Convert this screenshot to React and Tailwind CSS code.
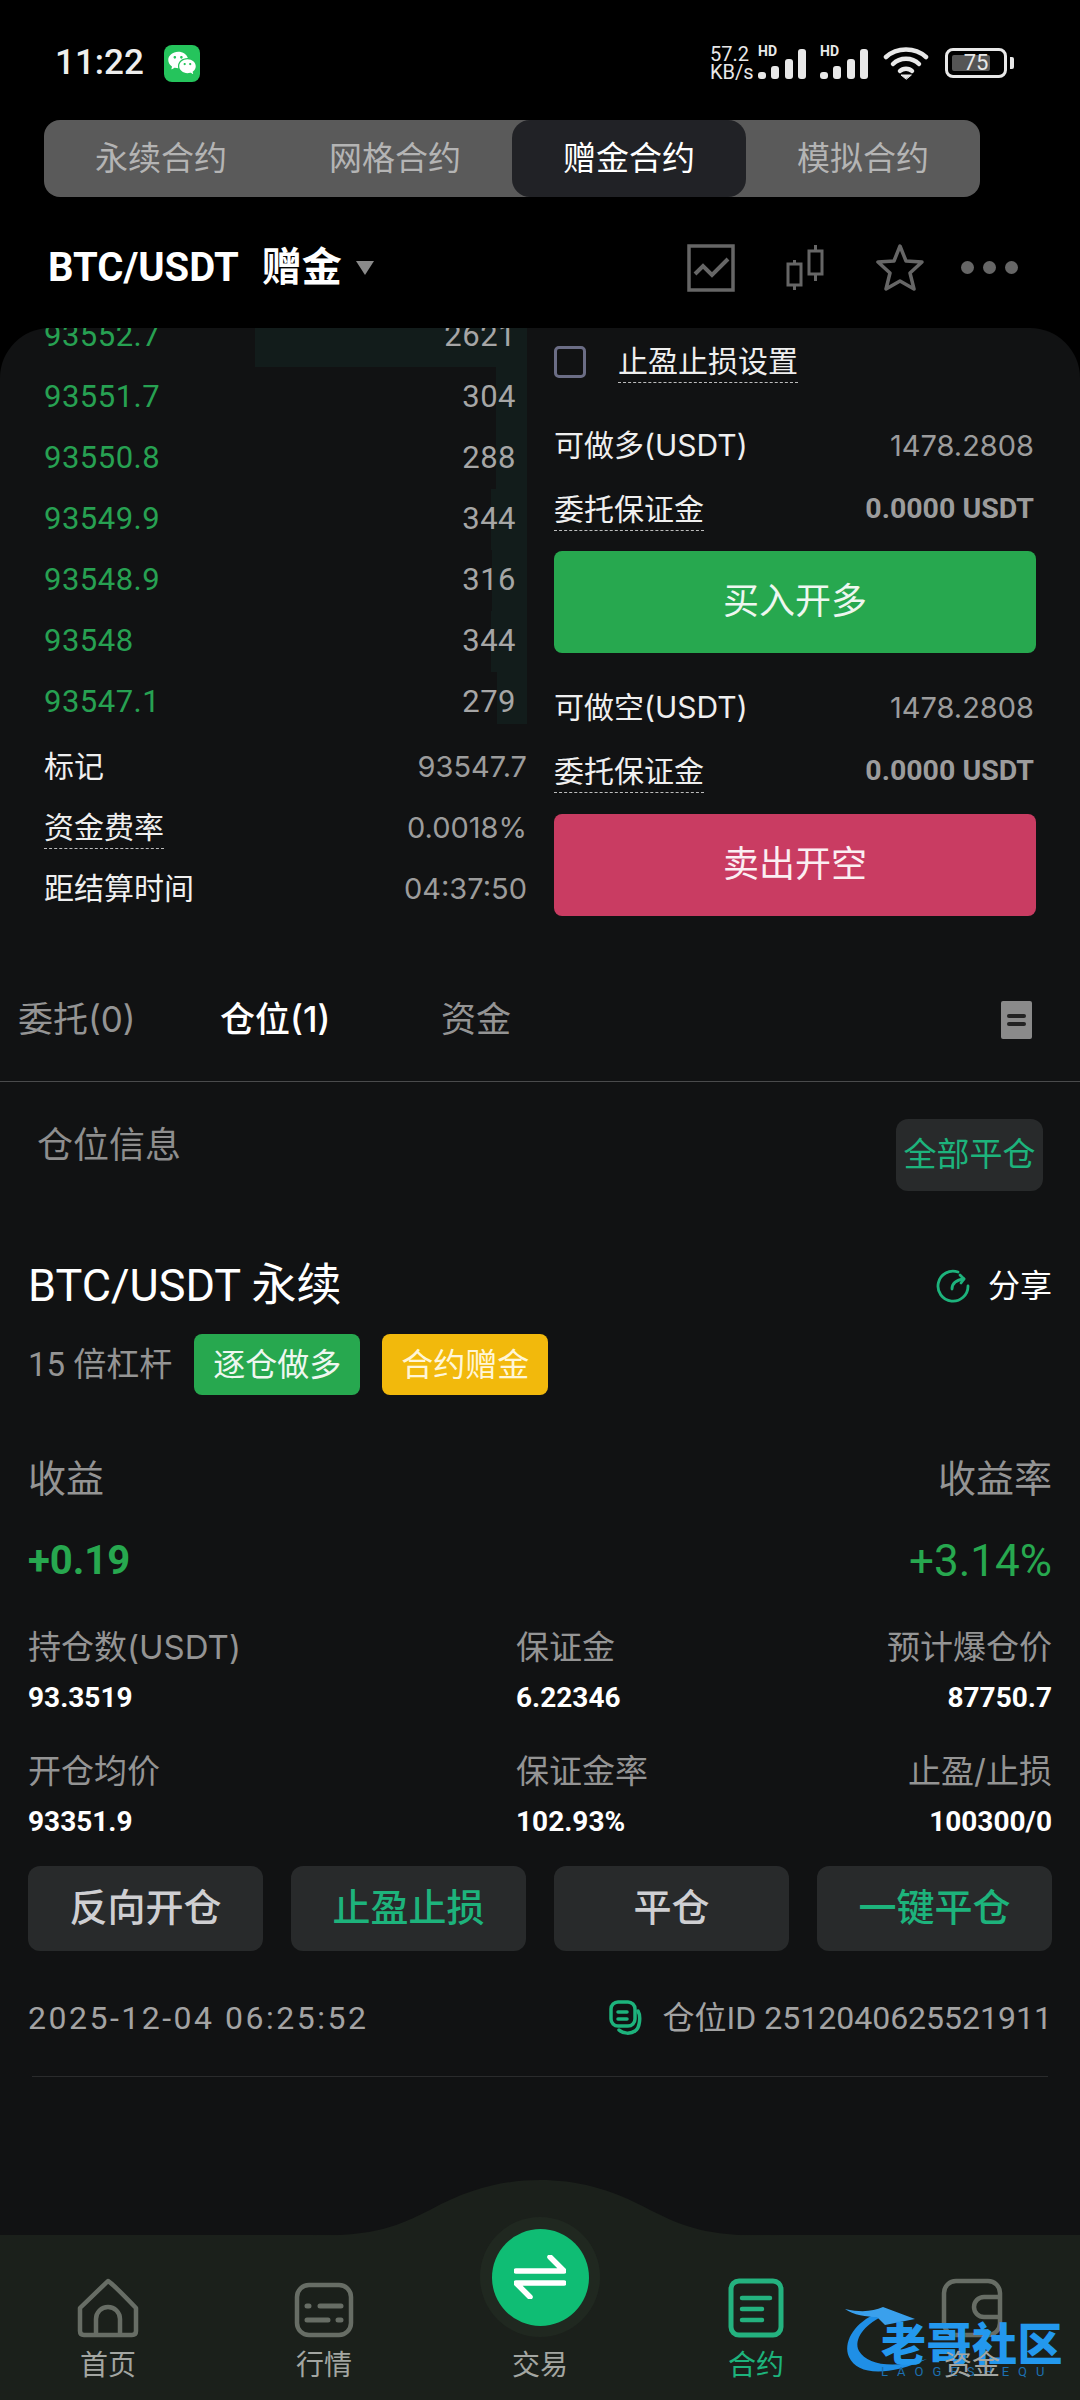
import React from 'react';
import { RiWechatFill } from 'react-icons/ri';

const book = [
  { price: '93552.7', qty: '2621', bar: 'w-[272px]' },
  { price: '93551.7', qty: '304', bar: 'w-[31px]' },
  { price: '93550.8', qty: '288', bar: 'w-[31px]' },
  { price: '93549.9', qty: '344', bar: 'w-[36px]' },
  { price: '93548.9', qty: '316', bar: 'w-[35px]' },
  { price: '93548', qty: '344', bar: 'w-[36px]' },
  { price: '93547.1', qty: '279', bar: 'w-[30px]' },
];

function StatusIcons() {
  return (
    <div className="flex items-center text-[#e8e8e8]">
      <div className="w-[48px] text-[20px] leading-[18px]">
        <div>57.2</div>
        <div>KB/s</div>
      </div>
      <Signal />
      <div className="w-[12px]" />
      <Signal />
      <svg className="ml-[13px]" width="46" height="34" viewBox="0 0 46 34" fill="none" stroke="#e8e8e8" strokeWidth="4.5" strokeLinecap="round">
        <path d="M3 11 C14 1 32 1 43 11" />
        <path d="M10 18 C17 11 29 11 36 18" />
        <path d="M17 25 C20 22 26 22 29 25" />
        <path d="M23 33 L18 29 L28 29 Z" fill="#e8e8e8" strokeWidth="1" />
      </svg>
      <div className="relative ml-[16px] flex h-[30px] w-[62px] items-center rounded-[8px] border-[3px] border-[#e8e8e8] p-[4px]">
        <div className="h-full w-[38px] rounded-[2px] bg-[#555]" />
        <span className="absolute inset-0 flex items-center justify-center text-[22px] leading-none">75</span>
      </div>
      <div className="ml-[3px] h-[12px] w-[4px] rounded-r-[2px] bg-[#e8e8e8]" />
    </div>
  );
}

function Signal() {
  return (
    <div className="relative h-[34px] w-[50px]">
      <span className="absolute left-0 top-[-2px] text-[14px] font-bold leading-none">HD</span>
      <svg className="absolute bottom-0 left-0" width="50" height="32" viewBox="0 0 50 32" fill="#e8e8e8">
        <rect x="0" y="24" width="8" height="7" rx="3" />
        <rect x="13" y="18" width="8" height="13" rx="3" />
        <rect x="27" y="11" width="8" height="20" rx="3" />
        <rect x="40" y="1" width="8" height="30" rx="3" />
      </svg>
    </div>
  );
}

function Dashed({ children }) {
  return <span className="border-b border-dashed border-[#bdbdbd] pb-[3px] leading-[36px]">{children}</span>;
}

function InfoRow({ label, value, dashed, bold }) {
  return (
    <div className="flex h-[61px] items-center justify-between">
      <span className="text-[30px] text-[#efefef] font-[Inter,'Noto_Sans_CJK_SC',sans-serif]">{dashed ? <Dashed>{label}</Dashed> : label}</span>
      <span className={bold ? 'font-bold text-[28.5px] text-[#9c9c9c]' : "text-[29px] text-[#9c9c9c] font-[Inter,'Noto_Sans_CJK_SC',sans-serif]"}>{value}</span>
    </div>
  );
}

function Stat({ label, value, className = '' }) {
  return (
    <div className={'flex flex-col ' + className}>
      <span className="text-[33px] leading-[44px] text-[#949494] font-[Inter,'Noto_Sans_CJK_SC',sans-serif]">{label}</span>
      <span className="mt-[7px] text-[28px] font-bold leading-[44px] text-white">{value}</span>
    </div>
  );
}

function ActionBtn({ children, green }) {
  return (
    <button className={'h-[85px] w-[235px] rounded-[12px] bg-[#282a2b] text-[38px] font-medium ' + (green ? 'text-[#1db37c]' : 'text-[#cfcfd2]')}>
      {children}
    </button>
  );
}

function NavItem({ label, active, children }) {
  return (
    <div className="flex w-[216px] flex-col items-center">
      <div className="flex h-[62px] items-end">{children}</div>
      <span className={'relative z-10 mt-[8px] text-[28px] leading-[40px] ' + (active ? 'text-[#1db37c]' : 'text-[#a3a6a2]')}>{label}</span>
    </div>
  );
}

export default function App() {
  return (
    <div className="relative flex h-[2400px] w-[1080px] flex-col overflow-hidden bg-black font-[Roboto,'Noto_Sans_CJK_SC',sans-serif] text-white">
      {/* status bar */}
      <div className="flex h-[120px] items-start justify-between pl-[55px] pr-[66px] pt-[45px]">
        <div className="-mt-[2px] flex items-center">
          <span className="text-[35px] font-medium leading-[40px] text-[#eeeeee]">11:22</span>
          <div className="ml-[20px] flex h-[37px] w-[36px] items-center justify-center rounded-[8px] bg-[#25c45c]">
            <RiWechatFill className="h-[30px] w-[30px] text-white" />
          </div>
        </div>
        <StatusIcons />
      </div>

      {/* contract tabs */}
      <div className="ml-[44px] grid h-[77px] w-[936px] grid-cols-4 rounded-[16px] bg-[#5a5a5a] text-[33px]">
        <div className="flex items-center justify-center text-[#b4b4b4]">永续合约</div>
        <div className="flex items-center justify-center text-[#b4b4b4]">网格合约</div>
        <div className="flex items-center justify-center rounded-[18px] bg-[#212226] text-white">赠金合约</div>
        <div className="flex items-center justify-center text-[#b4b4b4]">模拟合约</div>
      </div>

      {/* pair header */}
      <div className="flex h-[131px] items-center justify-between pl-[48px] pr-[62px] pt-[10px]">
        <div className="flex items-center">
          <span className="text-[40px] font-bold">BTC/USDT</span>
          <span className="ml-[23px] text-[40px] font-bold">赠金</span>
          <span className="ml-[14px] h-0 w-0 border-x-[9px] border-t-[14px] border-x-transparent border-t-[#8a8a8a]" />
        </div>
        <div className="flex items-center text-[#666]">
          <svg width="48" height="48" viewBox="0 0 48 48" fill="none" stroke="currentColor" strokeWidth="3.5">
            <rect x="2" y="2" width="44" height="44" />
            <path d="M8 30 L16 22 L25 31 L41 15" strokeWidth="4" />
          </svg>
          <svg className="ml-[51px]" width="38" height="48" viewBox="0 0 38 48" fill="none" stroke="currentColor" strokeWidth="3">
            <rect x="2" y="20" width="13" height="21" />
            <path d="M8.5 16 V20 M8.5 41 V46" />
            <rect x="23" y="7" width="13" height="23" />
            <path d="M29.5 1 V7 M29.5 30 V37" />
          </svg>
          <svg className="ml-[52px]" width="48" height="48" viewBox="0 0 48 48" fill="none" stroke="currentColor" strokeWidth="3.5" strokeLinejoin="round">
            <path d="M24 2 L30 17 L46 18 L34 29 L38 45 L24 37 L10 45 L14 29 L2 18 L18 17 Z" />
          </svg>
          <div className="ml-[37px] flex gap-[9px]">
            <span className="h-[13px] w-[13px] rounded-full bg-[#666]" />
            <span className="h-[13px] w-[13px] rounded-full bg-[#666]" />
            <span className="h-[13px] w-[13px] rounded-full bg-[#666]" />
          </div>
        </div>
      </div>

      {/* main panel */}
      <div className="flex flex-1 flex-col overflow-hidden rounded-t-[50px] bg-[#111213]">
        <div className="flex">
          <div className="w-[527px] pl-[44px]">
            <div className="-mt-[22px]">
              {book.map((row, i) => (
                <div key={row.price} className="relative flex h-[61px] items-center justify-between pr-[11px]">
                  <span className={'absolute right-0 top-0 bg-[#121c1b] ' + row.bar + (i === 6 ? ' h-[52px]' : ' h-[61px]')} />
                  <span className="relative text-[31px] tracking-[0.5px] text-[#27a152]">{row.price}</span>
                  <span className="relative text-[31px] tracking-[0.5px] text-[#a6a6a6]">{row.qty}</span>
                </div>
              ))}
            </div>
            <div className="mt-[3px]">
              <InfoRow label="标记" value="93547.7" />
              <InfoRow label="资金费率" value="0.0018%" dashed />
              <InfoRow label="距结算时间" value="04:37:50" />
            </div>
          </div>

          <div className="ml-[27px] w-[482px]">
            <div className="mt-[11px] flex items-center">
              <span className="h-[32px] w-[32px] rounded-[5px] border-[3px] border-[#6b6d85]" />
              <span className="ml-[32px] text-[30px] text-[#efefef]"><Dashed>止盈止损设置</Dashed></span>
            </div>
            <div className="mt-[31px] pr-[2px]">
              <InfoRow label="可做多(USDT)" value="1478.2808" />
              <div className="mt-[3px]"><InfoRow label="委托保证金" value="0.0000 USDT" dashed bold /></div>
            </div>
            <button className="mt-[11px] h-[102px] w-full rounded-[8px] bg-[#27a84f] text-[36px] text-[#eef7f0]">买入开多</button>
            <div className="mt-[24px] pr-[2px]">
              <InfoRow label="可做空(USDT)" value="1478.2808" />
              <div className="mt-[3px]"><InfoRow label="委托保证金" value="0.0000 USDT" dashed bold /></div>
            </div>
            <button className="mt-[12px] h-[102px] w-full rounded-[8px] bg-[#c93c62] text-[36px] text-[#fbeef2]">卖出开空</button>
          </div>
        </div>

        {/* order tabs */}
        <div className="relative mt-[47px] flex h-[116px] items-center border-b border-[#4a4b4c] pb-[8px] text-[35px] font-[Inter,'Noto_Sans_CJK_SC',sans-serif]">
          <span className="ml-[18px] w-[202px] text-[#949494]">委托(0)</span>
          <span className="w-[221px] font-medium text-white">仓位(1)</span>
          <span className="text-[#949494]">资金</span>
          <div className="ml-auto mr-[48px] flex h-[38px] w-[31px] flex-col justify-center gap-[4px] rounded-[2px] bg-[#8a8a8a] px-[6px]">
            <span className="h-[4px] rounded-full bg-[#222]" />
            <span className="h-[4px] rounded-full bg-[#222]" />
          </div>
        </div>

        <div className="mt-[37px] flex items-start justify-between pl-[37px] pr-[37px]">
          <span className="mt-[5px] text-[36px] leading-[44px] text-[#8e8e8e]">仓位信息</span>
          <button className="h-[72px] w-[147px] rounded-[12px] bg-[#282a2b] text-[33px] text-[#1db37c]">全部平仓</button>
        </div>

        <div className="px-[28px]">
          <div className="mt-[67px] flex items-center justify-between">
            <span className="text-[45px] leading-[56px] text-white">BTC/USDT 永续</span>
            <div className="flex items-center">
              <svg width="34" height="34" viewBox="0 0 34 34" fill="none" stroke="#1db37c" strokeWidth="2.8" strokeLinecap="round" strokeLinejoin="round">
                <path d="M22 3 A15 15 0 1 0 32 17" />
                <path d="M16 20 C16 14 20 11 28 10" />
                <path d="M24 6 L28 10 L25 14" />
              </svg>
              <span className="ml-[18px] text-[32px] text-white">分享</span>
            </div>
          </div>

          <div className="mt-[20px] flex items-center">
            <span className="text-[33px] text-[#949494]">15 倍杠杆</span>
            <span className="ml-[22px] flex h-[61px] w-[166px] items-center justify-center rounded-[8px] bg-[#27a84f] text-[32px] text-[#eef7f0]">逐仓做多</span>
            <span className="ml-[22px] flex h-[61px] w-[166px] items-center justify-center rounded-[8px] bg-[#f2b90c] text-[32px] text-[#fff6d8]">合约赠金</span>
          </div>

          <div className="mt-[59px] flex justify-between text-[38px] leading-[50px] text-[#949494]">
            <span>收益</span>
            <span>收益率</span>
          </div>
          <div className="mt-[32px] flex items-center justify-between leading-[50px] text-[#27a84f]">
            <span className="text-[40px] font-bold">+0.19</span>
            <span className="text-[44px]">+3.14%</span>
          </div>

          <div className="mt-[39px] grid grid-cols-[488px_1fr_auto] gap-y-[29px]">
            <Stat label="持仓数(USDT)" value="93.3519" />
            <Stat label="保证金" value="6.22346" />
            <Stat label="预计爆仓价" value="87750.7" className="items-end" />
            <Stat label="开仓均价" value="93351.9" />
            <Stat label="保证金率" value="102.93%" />
            <Stat label="止盈/止损" value="100300/0" className="items-end" />
          </div>

          <div className="mt-[22px] flex justify-between">
            <ActionBtn>反向开仓</ActionBtn>
            <ActionBtn green>止盈止损</ActionBtn>
            <ActionBtn>平仓</ActionBtn>
            <ActionBtn green>一键平仓</ActionBtn>
          </div>

          <div className="mt-[44px] flex items-center justify-between text-[32px] leading-[46px] text-[#a3a3a3]">
            <span className="tracking-[2.5px]">2025-12-04 06:25:52</span>
            <div className="flex items-center">
              <svg width="33" height="36" viewBox="0 0 33 36" fill="none" stroke="#1db37c" strokeWidth="3.5" strokeLinecap="round">
                <rect x="2" y="2" width="24" height="24" rx="7" />
                <path d="M29 11 C32 16 31 28 26 31 C22 34 14 34 10 30" />
                <path d="M9 12 H18 M9 19 H18" />
              </svg>
              <span className="ml-[21px]">仓位ID 2512040625521911</span>
            </div>
          </div>
          <div className="mx-[4px] mt-[35px] h-px bg-[#2a2b2c]" />
        </div>
      </div>

      {/* bottom nav */}
      <div className="relative flex h-[165px] bg-[#1b201b] pt-[41px]">
        <svg className="absolute left-[300px] top-[-55px]" width="480" height="56" viewBox="0 0 480 56" fill="#1b201b">
          <path d="M0 56 C70 56 90 50 130 30 C170 8 205 0 240 0 C275 0 310 8 350 30 C390 50 410 56 480 56 Z" />
        </svg>
        <NavItem label="首页">
          <svg width="62" height="60" viewBox="0 0 62 60" fill="none" stroke="#676d65" strokeWidth="4.5" strokeLinejoin="round">
            <path d="M3 30 L31 3 Q36 6 59 30 V53 Q59 57 55 57 H7 Q3 57 3 53 Z" />
            <path d="M19 57 V41 A12 12 0 0 1 43 41 V57" />
          </svg>
        </NavItem>
        <NavItem label="行情">
          <svg width="60" height="56" viewBox="0 0 60 56" fill="none" stroke="#676d65" strokeWidth="4.5" strokeLinecap="round">
            <rect x="3" y="3" width="54" height="50" rx="12" />
            <path d="M13 24 H15 M26 24 H47 M13 38 H34 M44 38 H47" strokeWidth="5" />
          </svg>
        </NavItem>
        <div className="flex w-[216px] flex-col items-center">
          <div className="absolute top-[-18px] flex h-[120px] w-[120px] items-center justify-center rounded-full bg-[#202820]">
            <div className="flex h-[97px] w-[97px] items-center justify-center rounded-full bg-[#0fbd74]">
              <svg width="52" height="44" viewBox="0 0 52 44" fill="none" stroke="#ffffff" strokeWidth="5.5" strokeLinecap="round" strokeLinejoin="round">
                <path d="M2 16 H50 L36 2" />
                <path d="M50 28 H2 L16 42" />
              </svg>
            </div>
          </div>
          <span className="mt-[70px] text-[28px] leading-[40px] text-[#a3a6a2]">交易</span>
        </div>
        <NavItem label="合约" active>
          <svg width="56" height="60" viewBox="0 0 56 60" fill="none" stroke="#24b27f" strokeWidth="5" strokeLinecap="round">
            <rect x="3" y="3" width="50" height="54" rx="8" />
            <path d="M14 20 H42 M14 31 H34 M14 42 H34" strokeWidth="4.5" />
          </svg>
        </NavItem>
        <NavItem label="资金">
          <svg width="62" height="60" viewBox="0 0 62 60" fill="none" stroke="#676d65" strokeWidth="4.5">
            <rect x="3" y="3" width="56" height="54" rx="12" />
            <path d="M59 19 H43 A10 10 0 0 0 43 39 H59" />
          </svg>
        </NavItem>

        {/* forum watermark */}
        <div className="absolute left-[843px] top-[72px] h-[70px] w-[225px]">
          <svg className="absolute left-0 top-0" width="100" height="70" viewBox="0 0 100 70" fill="none">
            <path d="M30 8 C10 18 0 36 6 50 C14 68 44 70 84 52 C50 62 24 58 16 44 C10 32 22 18 38 10 Z" fill="#1f8fe6" />
            <path d="M2 2 C20 6 30 4 40 0 L72 12 L42 18 L34 10 C24 10 10 8 2 2 Z" fill="#3aa0ec" />
          </svg>
          <span className="absolute left-[38px] top-[17px] whitespace-nowrap text-[45px] font-black leading-[44px] tracking-[0.5px] text-[#2398ee]">老哥社区</span>
          <span className="absolute left-[38px] top-[58px] whitespace-nowrap text-[13px] leading-[14px] tracking-[9px] text-[#1c6fb0]">LAOGESHEQU</span>
        </div>
      </div>
    </div>
  );
}
